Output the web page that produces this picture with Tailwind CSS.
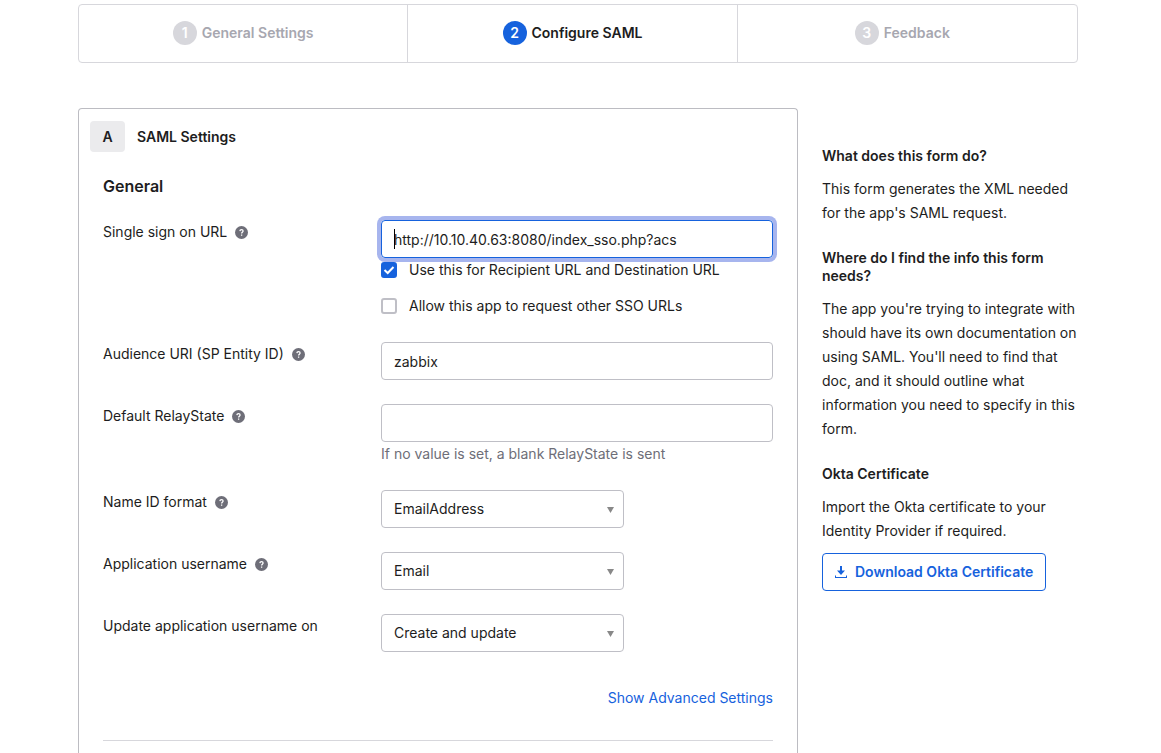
<!DOCTYPE html>
<html lang="en">
<head>
<meta charset="utf-8">
<meta name="viewport" content="width=device-width, initial-scale=1">
<title>Configure SAML</title>
<script src="https://cdn.jsdelivr.net/npm/@tailwindcss/browser@4"></script>
</head>
<body class="overflow-x-hidden bg-white pr-[5px] font-['Inter',sans-serif] text-sm leading-6 text-[#1d1d21]">
<svg class="hidden" aria-hidden="true">
  <symbol id="help" viewBox="0 0 13 13"><circle cx="6.500" cy="6.500" r="6.500" fill="#6e6e78"/><path d="M4.900 5.100C5 3.200 8.100 3.300 8.100 5C8.100 6.100 6.600 6.200 6.600 7.400M6.600 8.500V9.700" fill="none" stroke="#fff" stroke-width="1.300"/></symbol>
  <symbol id="arrow" viewBox="0 0 7 6"><path d="M0 0H7L3.500 6Z" fill="#888"/></symbol>
</svg>
<div class="mx-auto max-w-[1000px] pt-1">
  <nav aria-label="Steps">
    <ol class="flex h-[59px] rounded border border-[#d7d7dc] pb-px font-semibold text-[#a7a7b0]">
      <li class="-mb-px flex w-[33%] items-center justify-center gap-[5px] border-r border-[#d7d7dc] pb-px"><span class="flex size-6 items-center justify-center rounded-full bg-[#d7d7dc] text-white">1</span>General Settings</li>
      <li aria-current="step" class="-mb-px flex w-[33%] items-center justify-center gap-[5px] border-r border-[#d7d7dc] pb-px text-[#1d1d21]"><span class="flex size-6 items-center justify-center rounded-full bg-[#1662dd] text-white">2</span>Configure SAML</li>
      <li class="-mb-px flex flex-1 items-center justify-center gap-[5px] pr-2.5 pb-px"><span class="flex size-6 items-center justify-center rounded-full bg-[#d7d7dc] text-white">3</span>Feedback</li>
    </ol>
  </nav>

  <div class="mt-[45px] flex gap-6">
    <main class="w-[72%] rounded-t border border-b-0 border-[#bcbcc2] px-6 pt-3 pb-12">
      <h1 class="-ml-[13px] flex items-center gap-3 font-semibold"><span class="flex h-[31px] w-[35px] items-center justify-center rounded bg-[#ebebed]">A</span>SAML Settings</h1>
      <h2 class="mt-[22px] text-base font-semibold">General</h2>
      <form class="mt-[22px] flex flex-col gap-6">
        <div class="flex">
          <label for="sso" class="flex h-6 w-[278px] shrink-0 items-center gap-2">Single sign on URL <svg class="size-[13px]"><use href="#help"/></svg></label>
          <div class="flex-1">
            <div class="relative">
              <input id="sso" type="text" value="http://10.10.40.63:8080/index_sso.php?acs" class="block h-[38px] w-full rounded border border-[#1662dd] px-3 ring-4 ring-[#a7b5ee] outline-none">
              <span class="absolute top-[9px] left-[13px] h-5 w-px bg-black"></span>
            </div>
            <label class="relative flex h-6 items-center gap-3">
              <input type="checkbox" checked class="peer size-4 appearance-none rounded-[3px] border-2 border-[#bfbfc6] checked:border-[#1662dd] checked:bg-[#1662dd]">
              <svg class="pointer-events-none absolute top-1 left-0 size-4" viewBox="0 0 16 16"><path d="M3.500 8L6.700 11L12.500 5" fill="none" stroke="#fff" stroke-width="2"/></svg>
              Use this for Recipient URL and Destination URL
            </label>
            <label class="mt-3 flex h-6 items-center gap-3">
              <input type="checkbox" class="size-4 appearance-none rounded-[3px] border-2 border-[#bfbfc6] checked:border-[#1662dd] checked:bg-[#1662dd]">
              Allow this app to request other SSO URLs
            </label>
          </div>
        </div>
        <div class="flex">
          <label for="aud" class="flex h-6 w-[278px] shrink-0 items-center gap-2">Audience URI (SP Entity ID) <svg class="size-[13px]"><use href="#help"/></svg></label>
          <input id="aud" type="text" value="zabbix" class="h-[38px] min-w-0 flex-1 rounded border border-[#bfbfc6] px-3">
        </div>
        <div class="flex">
          <label for="relay" class="flex h-6 w-[278px] shrink-0 items-center gap-2">Default RelayState <svg class="size-[13px]"><use href="#help"/></svg></label>
          <div class="flex-1">
            <input id="relay" type="text" aria-describedby="relay-help" class="block h-[38px] w-full rounded border border-[#bfbfc6] px-3">
            <p id="relay-help" class="text-[#6e6e78]">If no value is set, a blank RelayState is sent</p>
          </div>
        </div>
        <div class="flex">
          <label for="nameid" class="flex h-6 w-[278px] shrink-0 items-center gap-2">Name ID format <svg class="size-[13px]"><use href="#help"/></svg></label>
          <div class="relative w-[243px]">
            <select id="nameid" class="block h-[38px] w-full appearance-none rounded border border-[#bfbfc6] px-3"><option>EmailAddress</option></select>
            <svg class="pointer-events-none absolute top-[17px] right-[10px] h-1.5 w-[7px]"><use href="#arrow"/></svg>
          </div>
        </div>
        <div class="flex">
          <label for="user" class="flex h-6 w-[278px] shrink-0 items-center gap-2">Application username <svg class="size-[13px]"><use href="#help"/></svg></label>
          <div class="relative w-[243px]">
            <select id="user" class="block h-[38px] w-full appearance-none rounded border border-[#bfbfc6] px-3"><option>Email</option></select>
            <svg class="pointer-events-none absolute top-[17px] right-[10px] h-1.5 w-[7px]"><use href="#arrow"/></svg>
          </div>
        </div>
        <div class="flex">
          <label for="update" class="flex h-6 w-[278px] shrink-0 items-center">Update application username on</label>
          <div class="relative w-[243px]">
            <select id="update" class="block h-[38px] w-full appearance-none rounded border border-[#bfbfc6] px-3"><option>Create and update</option></select>
            <svg class="pointer-events-none absolute top-[17px] right-[10px] h-1.5 w-[7px]"><use href="#arrow"/></svg>
          </div>
        </div>
      </form>
      <p class="mt-[34px] text-right"><a href="#" class="text-[#1662dd]">Show Advanced Settings</a></p>
      <hr class="mt-[30px] border-[#d7d7dc]">
    </main>

    <aside class="min-w-0 flex-1 pt-[39px]">
      <h2 class="leading-[18px] font-semibold">What does this form do?</h2>
      <p class="mt-3">This form generates the XML needed for the app's SAML request.</p>
      <h2 class="mt-6 leading-[18px] font-semibold">Where do I find the info this form needs?</h2>
      <p class="mt-3">The app you're trying to integrate with should have its own documentation on using SAML. You'll need to find that doc, and it should outline what information you need to specify in this form.</p>
      <h2 class="mt-6 leading-[18px] font-semibold">Okta Certificate</h2>
      <p class="mt-3">Import the Okta certificate to your Identity Provider if required.</p>
      <button type="button" class="mt-2.5 flex h-[38px] items-center gap-2 rounded border border-[#1662dd] px-3 font-semibold whitespace-nowrap text-[#1662dd]">
        <svg class="size-3" viewBox="0 0 12 12" fill="currentColor"><path d="M5 0H7V4.500H10L6 9L2 4.500H5ZM0 9.500H1V11H11V9.500H12V12H0Z"/></svg>
        Download Okta Certificate
      </button>
    </aside>
  </div>
</div>
</body>
</html>
